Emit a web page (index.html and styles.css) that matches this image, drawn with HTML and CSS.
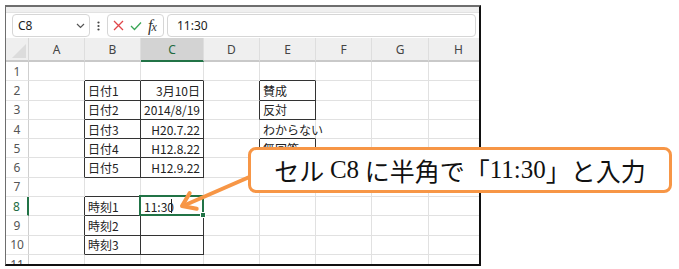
FILE: index.html
```html
<!DOCTYPE html>
<html lang="ja">
<head>
    <meta charset="UTF-8">
    <meta name="viewport" content="width=device-width, initial-scale=1.0">
    <title>時刻の入力</title>
    <link rel="stylesheet" href="styles.css">
</head>
<body>
    <div class="sheet">
        <div class="top-strip"></div>
        <div class="fbar">
            <div class="namebox">
                <span>C8</span>
                <svg width="9" height="6" viewBox="0 0 9 6"><path d="M1 1 L4.5 4.5 L8 1" fill="none" stroke="#555" stroke-width="1.2"/></svg>
            </div>
            <svg class="dots" width="3" height="10" viewBox="0 0 3 10"><circle cx="1.5" cy="1.5" r="1.1" fill="#444"/><circle cx="1.5" cy="5" r="1.1" fill="#444"/><circle cx="1.5" cy="8.5" r="1.1" fill="#444"/></svg>
            <div class="fbtns">
                <svg width="11" height="11" viewBox="0 0 11 11"><path d="M1 1 L10 10 M10 1 L1 10" stroke="#e0464a" stroke-width="1.3" fill="none"/></svg>
                <svg width="12" height="10" viewBox="0 0 12 10"><path d="M1 5 L4.5 8.5 L11 1.5" stroke="#3aa657" stroke-width="1.3" fill="none"/></svg>
                <span class="fx">f<i>x</i></span>
            </div>
            <div class="finput">11:30</div>
        </div>
        <div class="grid" id="grid">
            <!-- cells are built by the script below -->
        </div>
    </div>

    <svg class="arrow" width="679" height="269" viewBox="0 0 679 269">
        <line x1="254" y1="175" x2="184" y2="205.5" stroke="#f79646" stroke-width="4" stroke-linecap="round"/>
        <polyline points="196.7,208.8 182,206 189.7,193.1" fill="none" stroke="#f79646" stroke-width="4" stroke-linecap="round" stroke-linejoin="round"/>
    </svg>

    <div class="callout">セル <span class="latin">C8</span> に半角で「<span class="latin">11:30</span>」と入力</div>

    <script>
        const cols = ['A', 'B', 'C', 'D', 'E', 'F', 'G', 'H'];
        const data = {
            B2: '日付1', C2: '3月10日',
            B3: '日付2', C3: '2014/8/19',
            B4: '日付3', C4: 'H20.7.22',
            B5: '日付4', C5: 'H12.8.22',
            B6: '日付5', C6: 'H12.9.22',
            E2: '賛成', E3: '反対', E4: 'わからない', E5: '無回答',
            B8: '時刻1', C8: '11:30',
            B9: '時刻2', B10: '時刻3'
        };
        const rightAligned = ['C2', 'C3', 'C4', 'C5', 'C6'];
        const boxed = ['B2', 'C2', 'B3', 'C3', 'B4', 'C4', 'B5', 'C5', 'B6', 'C6',
            'E2', 'E3', 'E5', 'B8', 'C8', 'B9', 'C9', 'B10', 'C10'];

        function isBoxed(c, r) {
            return c >= 0 && c < cols.length && boxed.includes(cols[c] + r);
        }

        function buildGrid() {
            const grid = document.getElementById('grid');
            grid.innerHTML = '<div class="corner"><span></span></div>';

            cols.forEach(col => {
                const h = document.createElement('div');
                h.className = col === 'C' ? 'colhead active' : 'colhead';
                h.textContent = col;
                grid.appendChild(h);
            });

            for (let r = 1; r <= 11; r++) {
                const rh = document.createElement('div');
                rh.className = r === 8 ? 'rowhead active' : 'rowhead';
                rh.textContent = r;
                grid.appendChild(rh);

                cols.forEach((col, c) => {
                    const id = col + r;
                    const cell = document.createElement('div');
                    cell.className = 'cell';
                    if (isBoxed(c, r) || isBoxed(c + 1, r)) cell.classList.add('dark-r');
                    if (isBoxed(c, r) || isBoxed(c, r + 1)) cell.classList.add('dark-b');
                    if (rightAligned.includes(id)) cell.classList.add('num');
                    if (data[id]) cell.textContent = data[id];
                    if (id === 'C8') {
                        cell.classList.add('sel');
                        cell.innerHTML = '11:30<span class="caret"></span><span class="handle"></span>';
                    }
                    grid.appendChild(cell);
                });
            }
        }

        buildGrid();
    </script>
</body>
</html>
```

FILE: styles.css
```css
body {
    margin: 0;
    width: 679px;
    height: 269px;
    background: #fff;
    position: relative;
    overflow: hidden;
    font-family: "Noto Sans", "Noto Sans CJK JP", sans-serif;
}
.sheet {
    margin: 5px 0 0 5px;
    width: 476px;
    height: 261px;
    box-sizing: border-box;
    border-top: 2px solid #6e6e6e;
    border-left: 1px solid #6e6e6e;
    border-right: 2px solid #111;
    border-bottom: 2px solid #111;
    overflow: hidden;
    background: #fff;
}
.top-strip {
    height: 5px;
    background: #efefef;
    border-bottom: 1px solid #e2e2e2;
}
.fbar {
    height: 25px;
    display: flex;
    align-items: center;
    padding: 0 3px 0 6px;
    background: #fff;
}
.namebox {
    width: 78px;
    height: 23px;
    box-sizing: border-box;
    border: 1px solid #d6d6d6;
    border-radius: 4px;
    display: flex;
    align-items: center;
    justify-content: space-between;
    padding: 0 4px 0 5px;
    font-size: 12px;
    color: #222;
}
.dots {
    margin: 0 7px 0 7px;
}
.fbtns {
    width: 57px;
    height: 23px;
    box-sizing: border-box;
    border: 1px solid #d6d6d6;
    border-radius: 4px;
    display: flex;
    align-items: center;
    gap: 6px;
    padding-left: 5px;
}
.fx {
    font-family: "Liberation Serif", serif;
    font-style: italic;
    font-size: 16px;
    color: #333;
    letter-spacing: -1px;
}
.fx i {
    font-size: 12px;
}
.finput {
    flex: 1;
    margin-left: 3px;
    height: 23px;
    box-sizing: border-box;
    border: 1px solid #d6d6d6;
    border-radius: 4px;
    padding-left: 9px;
    font-size: 12px;
    line-height: 21px;
    color: #222;
}
.grid {
    display: grid;
    grid-template-columns: 23px 56px 56px 63px 56px 56px 56px 57px 60px;
    grid-template-rows: 24px repeat(11, 19.3px);
    font-family: "Noto Sans CJK JP", sans-serif;
    font-size: 12px;
    color: #222;
}
.corner {
    background: #efefef;
    border-right: 1px solid #d8d8d8;
    border-bottom: 2px solid #c9c9c9;
    position: relative;
}
.corner span {
    position: absolute;
    right: 2px;
    bottom: 2px;
    width: 0;
    height: 0;
    border-left: 14px solid transparent;
    border-bottom: 14px solid #dcdcdc;
}
.colhead {
    background: #efefef;
    border-right: 1px solid #dedede;
    border-bottom: 2px solid #c9c9c9;
    display: flex;
    align-items: center;
    justify-content: center;
    font-family: "Noto Sans", sans-serif;
    font-size: 12px;
    color: #444;
}
.colhead.active {
    background: #d3d3d3;
    color: #1e6b3f;
    border-bottom-color: #217346;
}
.rowhead {
    background: #fff;
    border-right: 1px solid #cfcfcf;
    border-bottom: 1px solid #e6e6e6;
    display: flex;
    align-items: center;
    justify-content: center;
    font-family: "Noto Sans", sans-serif;
    font-size: 12px;
    color: #555;
}
.rowhead.active {
    color: #1e6b3f;
    border-right: 2px solid #217346;
}
.cell {
    border-right: 1px solid #e1e1e1;
    border-bottom: 1px solid #e1e1e1;
    padding: 0 3px;
    white-space: nowrap;
    display: flex;
    align-items: center;
    overflow: visible;
    position: relative;
}
.cell.dark-r {
    border-right-color: #333;
}
.cell.dark-b {
    border-bottom-color: #333;
}
.cell.num {
    justify-content: flex-end;
}
.cell.sel {
    z-index: 1;
}
.cell.sel::after {
    content: "";
    position: absolute;
    left: -2px;
    top: -2px;
    right: -1px;
    bottom: -1px;
    border: 2px solid #217346;
}
.caret {
    position: absolute;
    left: 30px;
    top: 2px;
    bottom: 2px;
    border-left: 1px solid #222;
}
.handle {
    position: absolute;
    right: -3px;
    bottom: -3px;
    width: 4px;
    height: 4px;
    background: #217346;
    border: 1px solid #fff;
    z-index: 2;
}
.arrow {
    position: absolute;
    left: 0;
    top: 0;
    pointer-events: none;
    z-index: 2;
}
.callout {
    position: absolute;
    left: 248px;
    top: 147px;
    width: 424px;
    height: 46px;
    box-sizing: border-box;
    border: 3px solid #f79646;
    border-radius: 8px;
    background: #fff;
    z-index: 3;
    display: flex;
    align-items: center;
    justify-content: center;
    white-space: pre;
    font-family: "Noto Sans CJK JP", sans-serif;
    font-size: 25px;
    color: #111;
}
.callout .latin {
    font-family: "Liberation Serif", serif;
}
```
